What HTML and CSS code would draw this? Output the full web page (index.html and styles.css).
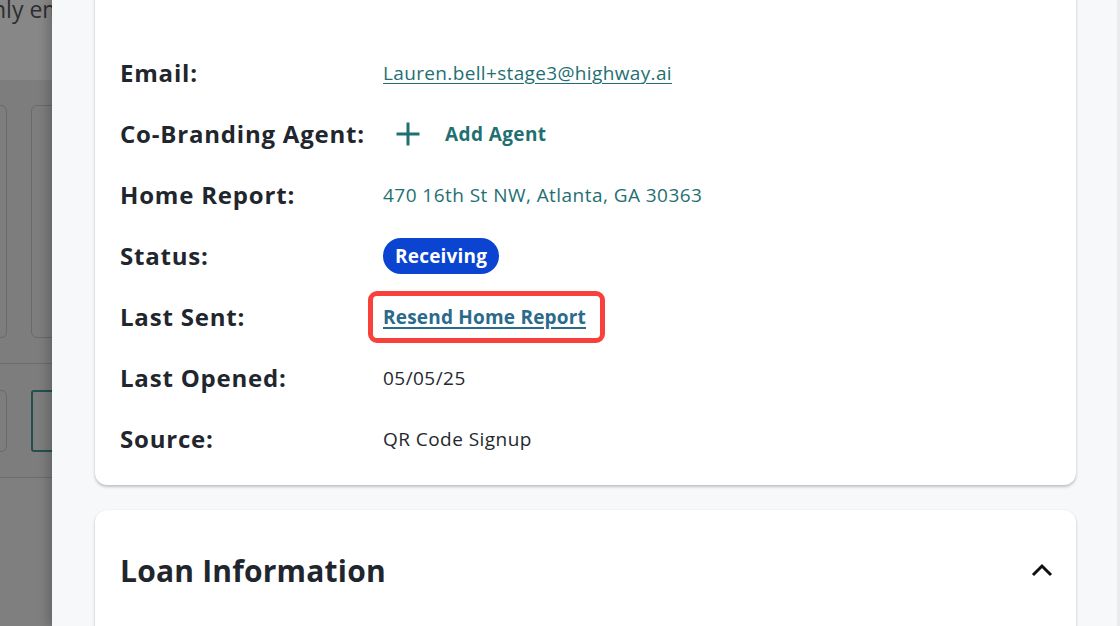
FILE: index.html
```html
<!DOCTYPE html>
<html lang="en">
<head>
<meta charset="utf-8">
<title>Contact details</title>
<link rel="stylesheet" href="styles.css">
</head>
<body>
<div class="screen">
  <div class="backdrop">
    <div class="backdrop-inner">
      <div class="bd-top"><span class="bd-text">Only emails</span></div>
      <div class="bd-row bd-row-tall">
        <div class="bd-box"></div>
        <div class="bd-box"></div>
      </div>
      <div class="bd-row bd-row-short">
        <div class="bd-box"></div>
        <div class="bd-box bd-box-active"></div>
      </div>
      <div class="bd-rest"></div>
    </div>
  </div>

  <div class="panel">
    <div class="stack">
      <section class="card details">
        <div class="row">
          <div class="label">Email:</div>
          <div class="value"><a class="email" href="#">Lauren.bell+stage3@highway.ai</a></div>
        </div>
        <div class="row">
          <div class="label">Co-Branding Agent:</div>
          <div class="value">
            <a class="add-agent" href="#">
              <svg class="plus" viewBox="0 0 26 26" width="26" height="26" aria-hidden="true">
                <path d="M13 1.5v23M1.5 13h23" stroke="currentColor" stroke-width="3" fill="none"/>
              </svg>
              <span>Add Agent</span>
            </a>
          </div>
        </div>
        <div class="row">
          <div class="label">Home Report:</div>
          <div class="value teal">470 16th St NW, Atlanta, GA 30363</div>
        </div>
        <div class="row">
          <div class="label">Status:</div>
          <div class="value"><span class="badge">Receiving</span></div>
        </div>
        <div class="row">
          <div class="label">Last Sent:</div>
          <div class="value">
            <span class="highlight"><a class="resend" href="#">Resend Home Report</a></span>
          </div>
        </div>
        <div class="row">
          <div class="label">Last Opened:</div>
          <div class="value">05/05/25</div>
        </div>
        <div class="row">
          <div class="label">Source:</div>
          <div class="value">QR Code Signup</div>
        </div>
      </section>

      <section class="card loan">
        <div class="loan-head">
          <h2>Loan Information</h2>
          <svg class="chevron" viewBox="0 0 22 14" width="22" height="14" aria-hidden="true">
            <path d="M2 12L11 3l9 9" stroke="#111" stroke-width="3" fill="none"/>
          </svg>
        </div>
      </section>
    </div>
  </div>
</div>
</body>
</html>
```

FILE: styles.css
```css
* { box-sizing: border-box; }

html, body {
  margin: 0;
  padding: 0;
  width: 1120px;
  height: 626px;
  overflow: hidden;
}

body {
  font-family: "Open Sans", "Lato", "Liberation Sans", sans-serif;
  color: #1f262d;
}

.screen {
  display: flex;
  width: 1120px;
  height: 626px;
  overflow: hidden;
}

/* dimmed page behind the drawer */
.backdrop {
  width: 52px;
  flex: 0 0 52px;
  height: 626px;
  overflow: hidden;
  display: flex;
  justify-content: flex-end;
  background: #7d7d7d;
}

.backdrop-inner {
  flex: 0 0 200px;
  width: 200px;
  display: flex;
  flex-direction: column;
}

.bd-top {
  height: 80px;
  background: #878787;
  display: flex;
  justify-content: flex-end;
}

.bd-text {
  font-size: 23px;
  line-height: 18px;
  color: #2e2e2e;
  white-space: nowrap;
  margin-right: -47px;
}

.bd-row {
  display: flex;
  justify-content: flex-end;
  gap: 24px;
  border-bottom: 1px solid #6c6c6c;
}

.bd-row-tall {
  height: 284px;
  padding: 25px 0 25px;
}

.bd-row-short {
  height: 114px;
  padding: 26px 0 25px;
}

.bd-box {
  width: 80px;
  border: 1px solid #6a6a6a;
  border-radius: 6px;
}

.bd-box + .bd-box {
  margin-right: -59px;
}

.bd-box-active {
  border: 2px solid #23504e;
  border-radius: 3px;
}

.bd-rest {
  flex: 1;
  background: #7f7f7f;
}

/* drawer */
.panel {
  flex: 1;
  height: 626px;
  background: #f7f8fa;
  border-right: 3px solid #e9ebee;
  box-shadow: -5px 0 9px rgba(0, 0, 0, 0.18);
  position: relative;
  overflow: hidden;
}

.stack {
  display: flex;
  flex-direction: column;
  gap: 25px;
  padding: 0 41px 0 43px;
  margin-top: -30px;
}

.card {
  background: #ffffff;
  border-radius: 12px;
  box-shadow: 0 2px 3px rgba(0, 0, 0, 0.22), 0 0 1px rgba(0, 0, 0, 0.12);
}

.details {
  padding: 72px 25px 16px;
}

.row {
  display: flex;
  align-items: center;
  height: 61px;
}

.label {
  width: 263px;
  flex: 0 0 263px;
  font-size: 24px;
  font-weight: 700;
  letter-spacing: 0.8px;
  color: #1f262d;
}

.value {
  font-size: 19px;
  letter-spacing: 0.45px;
  color: #24292e;
  display: flex;
  align-items: center;
}

.teal { color: #1f6f73; }

.email {
  color: #1f6f73;
  letter-spacing: 0.35px;
  text-decoration: underline;
  text-underline-offset: 3px;
  text-decoration-thickness: 1px;
}

.add-agent {
  display: flex;
  align-items: center;
  gap: 24px;
  color: #1f6f73;
  font-weight: 700;
  letter-spacing: 0.4px;
  text-decoration: none;
  padding-left: 12px;
}

.plus { display: block; }

.badge {
  display: inline-flex;
  align-items: center;
  height: 36px;
  padding: 0 12px;
  border-radius: 18px;
  background: #0a44d0;
  color: #ffffff;
  font-weight: 700;
  font-size: 19px;
  letter-spacing: 0.2px;
}

.highlight {
  display: inline-flex;
  align-items: center;
  height: 52px;
  padding: 0 14px 0 10px;
  margin-left: -15px;
  border: 5px solid #f8413b;
  border-radius: 9px;
}

.resend {
  color: #2a6b8c;
  font-weight: 700;
  letter-spacing: 0.2px;
  text-decoration: underline;
  text-underline-offset: 3px;
  text-decoration-thickness: 2px;
}

.loan {
  height: 200px;
  padding: 40px 23px 0 25px;
}

.loan-head {
  display: flex;
  align-items: center;
  justify-content: space-between;
  height: 40px;
}

.loan-head h2 {
  margin: 0;
  font-size: 30px;
  font-weight: 700;
  letter-spacing: 0.2px;
  color: #1f262d;
}

.chevron { display: block; }
```
